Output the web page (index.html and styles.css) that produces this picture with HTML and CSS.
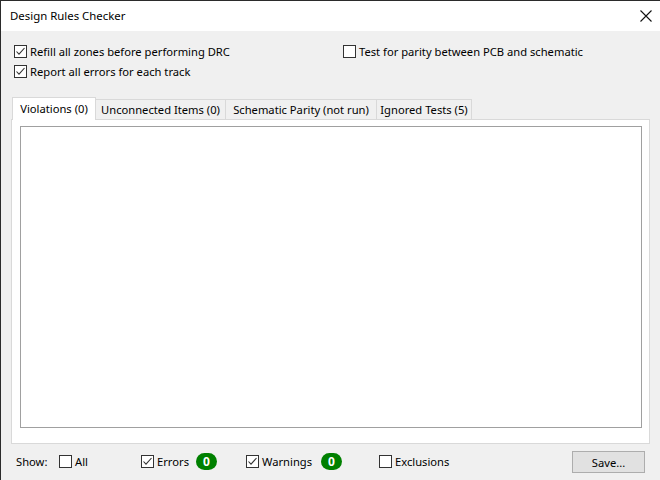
FILE: index.html
```html
<!DOCTYPE html>
<html>
<head>
<meta charset="utf-8">
<link rel="stylesheet" href="styles.css">
</head>
<body>
<div class="window">
  <div class="titlebar">
    <span class="title">Design Rules Checker</span>
    <svg class="close" width="12" height="12" viewBox="0 0 12 12"><path d="M0.5 0.5 L11.5 11.5 M11.5 0.5 L0.5 11.5" stroke="#111" stroke-width="1.1" fill="none"/></svg>
  </div>
  <div class="content">
    <div class="options">
      <div class="col">
        <label class="cb"><span class="box checked"><svg width="11" height="11" viewBox="0 0 11 11"><path d="M1.5 5.5 L4 8.2 L9.5 2" stroke="#333" stroke-width="1.1" fill="none"/></svg></span>Refill all zones before performing DRC</label>
        <label class="cb"><span class="box checked"><svg width="11" height="11" viewBox="0 0 11 11"><path d="M1.5 5.5 L4 8.2 L9.5 2" stroke="#333" stroke-width="1.1" fill="none"/></svg></span>Report all errors for each track</label>
      </div>
      <div class="col col2">
        <label class="cb"><span class="box"></span>Test for parity between PCB and schematic</label>
      </div>
    </div>
    <div class="tabs">
      <div class="tab active t1">Violations (0)</div>
      <div class="tab t2">Unconnected Items (0)</div>
      <div class="tab t3">Schematic Parity (not run)</div>
      <div class="tab t4">Ignored Tests (5)</div>
    </div>
    <div class="panel">
      <div class="listbox"></div>
    </div>
    <div class="footer">
      <span class="show">Show:</span>
      <label class="cb f-all"><span class="box"></span>All</label>
      <label class="cb f-err"><span class="box checked"><svg width="11" height="11" viewBox="0 0 11 11"><path d="M1.5 5.5 L4 8.2 L9.5 2" stroke="#333" stroke-width="1.1" fill="none"/></svg></span>Errors</label>
      <span class="badge b-err">0</span>
      <label class="cb f-warn"><span class="box checked"><svg width="11" height="11" viewBox="0 0 11 11"><path d="M1.5 5.5 L4 8.2 L9.5 2" stroke="#333" stroke-width="1.1" fill="none"/></svg></span>Warnings</label>
      <span class="badge b-warn">0</span>
      <label class="cb f-excl"><span class="box"></span>Exclusions</label>
      <button class="save">Save...</button>
    </div>
  </div>
</div>
</body>
</html>
```
FILE: styles.css
```css
html, body {
  margin: 0;
  padding: 0;
  width: 660px;
  height: 480px;
  overflow: hidden;
  background: #f0f0f0;
}
body {
  font-family: "Noto Sans", "Open Sans", "DejaVu Sans", sans-serif;
  font-size: 11.2px;
  color: #000;
}
.window {
  width: 659px;
  height: 479px;
  border-top: 1px solid #2b2b2b;
  border-left: 1px solid #2b2b2b;
  background: #f0f0f0;
  display: flex;
  flex-direction: column;
}
.titlebar {
  height: 30px;
  background: #fff;
  display: flex;
  align-items: center;
  justify-content: space-between;
  padding: 0 8px 0 9px;
}
.title {
  font-size: 11.4px;
  line-height: 16px;
}
.close {
  display: block;
}
.content {
  display: flex;
  flex-direction: column;
  padding: 12px 10px 0 10px;
}
.options {
  display: flex;
  padding-left: 3px;
}
.col {
  display: flex;
  flex-direction: column;
  gap: 3px;
}
.options .col:first-child {
  width: 329px;
}
.cb {
  display: flex;
  align-items: center;
  height: 17px;
  line-height: 17px;
  white-space: nowrap;
}
.box {
  width: 11px;
  height: 11px;
  border: 1px solid #333;
  background: #fff;
  margin-right: 3px;
  display: flex;
  align-items: center;
  justify-content: center;
  flex: none;
}
.box svg { display: block; }
.tabs {
  display: flex;
  align-items: flex-end;
  margin-top: 16px;
  padding-left: 1px;
  height: 23px;
}
.tab {
  height: 20px;
  line-height: 19px;
  padding: 0;
  text-align: center;
  border: 1px solid #d9d9d9;
  border-bottom: none;
  border-left: none;
  background: #f0f0f0;
  white-space: nowrap;
  box-sizing: border-box;
  flex: none;
}
.tab.active {
  height: 23px;
  line-height: 21px;
  background: #fff;
  border-left: 1px solid #d9d9d9;
  margin-bottom: -1px;
  position: relative;
  z-index: 1;
}
.t1 { width: 84px; }
.t2 { width: 130px; }
.t3 { width: 151px; }
.t4 { width: 95px; }
.panel {
  border: 1px solid #d9d9d9;
  background: #fff;
  padding: 6px 7px 15px 8px;
  box-sizing: border-box;
  height: 325px;
}
.listbox {
  height: 100%;
  border: 1px solid #a0a0a0;
  background: #fff;
  box-sizing: border-box;
}
.footer {
  display: flex;
  align-items: center;
  height: 22px;
  margin-top: 6px;
  padding-left: 5px;
}
.show { width: 43px; }
.f-all { width: 82px; }
.f-err { width: 55px; }
.f-warn { width: 75px; }
.badge {
  display: inline-block;
  width: 21px;
  height: 17px;
  line-height: 17px;
  border-radius: 9px;
  background: #008000;
  color: #fff;
  font-weight: bold;
  text-align: center;
  font-size: 12px;
  flex: none;
}
.b-err { margin-right: 29px; }
.b-warn { margin-right: 37px; }
.save {
  margin-left: auto;
  margin-right: 5px;
  width: 73px;
  height: 22px;
  margin-top: 2px;
  background: #e1e1e1;
  border: 1px solid #adadad;
  font-family: inherit;
  font-size: 11.2px;
  padding: 0;
  color: #000;
}
```
